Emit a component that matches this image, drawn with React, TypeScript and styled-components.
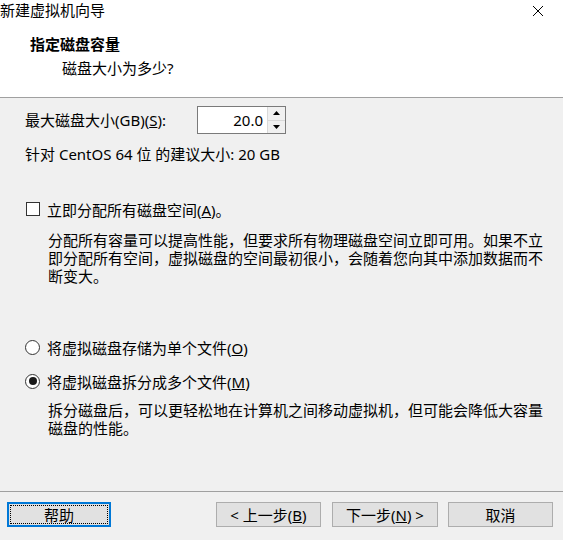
import React from "react";
import styled, { createGlobalStyle } from "styled-components";

const Global = createGlobalStyle`
  html, body { margin: 0; padding: 0; background: #f0f0f0; }
  body { font-family: "Noto Sans", "Noto Sans CJK SC", sans-serif; font-size: 15px; color: #000; }
  * { box-sizing: border-box; }
`;

const Window = styled.div`
  width: 563px;
  height: 540px;
  display: flex;
  flex-direction: column;
  background: #f0f0f0;
  overflow: hidden;
`;

const TitleBar = styled.div`
  height: 22px;
  background: #fff;
  display: flex;
  align-items: center;
  justify-content: space-between;
  padding: 0 19px 0 0;
`;

const TitleText = styled.span`
  font-size: 15px;
  line-height: 20px;
  color: #000;
  margin-top: -2px;
`;

const Header = styled.div`
  height: 76px;
  background: #fff;
  border-bottom: 1px solid #a0a0a0;
  padding: 12px 0 0 30px;
  display: flex;
  flex-direction: column;
  gap: 4px;
`;

const HeaderTitle = styled.div`
  font-weight: bold;
  line-height: 20px;
`;

const HeaderSub = styled.div`
  line-height: 20px;
  padding-left: 32px;
`;

const Body = styled.div`
  flex: 1;
  padding: 8px 0 0 25px;
  display: flex;
  flex-direction: column;
`;

const SizeRow = styled.div`
  height: 28px;
  display: flex;
  align-items: center;
`;

const Label = styled.span`
  width: 172px;
  line-height: 18px;
`;

const Spin = styled.div`
  width: 89px;
  height: 28px;
  border: 1px solid #7a7a7a;
  background: #fff;
  display: flex;
`;

const SpinValue = styled.div`
  flex: 1;
  text-align: right;
  padding-right: 4px;
  line-height: 26px;
  font-size: 15px;
`;

const SpinButtons = styled.div`
  width: 18px;
  display: flex;
  flex-direction: column;
  border-left: 1px solid #d9d9d9;
`;

const SpinBtn = styled.div<{ $down?: boolean }>`
  flex: 1;
  background: #f0f0f0;
  display: flex;
  align-items: center;
  justify-content: center;
  border-top: ${(p) => (p.$down ? "1px solid #d9d9d9" : "none")};
`;

const Line = styled.div<{ $mt?: number }>`
  line-height: 18px;
  margin-top: ${(p) => p.$mt ?? 0}px;
`;

const OptionRow = styled.div<{ $mt: number }>`
  display: flex;
  align-items: center;
  height: 18px;
  margin-top: ${(p) => p.$mt}px;
  gap: 7px;
`;

const CheckBox = styled.span`
  flex-shrink: 0;
  width: 14px;
  height: 14px;
  margin-left: 1px;
  border: 1px solid #333;
  background: #fff;
  display: inline-block;
`;

const Radio = styled.span<{ $on?: boolean }>`
  flex-shrink: 0;
  width: 15px;
  height: 15px;
  border-radius: 50%;
  border: 1px solid #333;
  background: #fff;
  display: inline-flex;
  align-items: center;
  justify-content: center;
  &::after {
    content: "";
    width: 8px;
    height: 8px;
    border-radius: 50%;
    background: ${(p) => (p.$on ? "#1a1a1a" : "transparent")};
  }
`;

const Desc = styled.div<{ $mt: number }>`
  margin-top: ${(p) => p.$mt}px;
  padding-left: 23px;
  line-height: 18px;
  width: 540px;
`;

const Footer = styled.div`
  height: 49px;
  border-top: 1px solid #a0a0a0;
  padding: 10px 10px 0 7px;
  display: flex;
  align-items: flex-start;
`;

const Button = styled.div<{ $w: number; $ml?: number; $focus?: boolean }>`
  position: relative;
  width: ${(p) => p.$w}px;
  height: 25px;
  margin-left: ${(p) => p.$ml ?? 0}px;
  background: #e1e1e1;
  border: 1px solid ${(p) => (p.$focus ? "#0078d7" : "#adadad")};
  box-shadow: ${(p) => (p.$focus ? "inset 0 0 0 1px #0078d7" : "none")};
  display: flex;
  align-items: center;
  justify-content: center;
  line-height: 18px;
  &::after {
    content: "";
    display: ${(p) => (p.$focus ? "block" : "none")};
    position: absolute;
    inset: 2px;
    border: 1px dotted #000;
  }
`;

export default function App() {
  return (
    <>
      <Global />
      <Window>
        <TitleBar>
          <TitleText>新建虚拟机向导</TitleText>
          <svg width="12" height="12" viewBox="0 0 12 12">
            <path d="M1 1 L11 11 M11 1 L1 11" stroke="#000" strokeWidth="1" />
          </svg>
        </TitleBar>
        <Header>
          <HeaderTitle>指定磁盘容量</HeaderTitle>
          <HeaderSub>磁盘大小为多少?</HeaderSub>
        </Header>
        <Body>
          <SizeRow>
            <Label>
              最大磁盘大小(GB)(<u>S</u>):
            </Label>
            <Spin>
              <SpinValue>20.0</SpinValue>
              <SpinButtons>
                <SpinBtn>
                  <svg width="7" height="4" viewBox="0 0 7 4">
                    <path d="M0 4 L3.5 0 L7 4 Z" fill="#000" />
                  </svg>
                </SpinBtn>
                <SpinBtn $down>
                  <svg width="7" height="4" viewBox="0 0 7 4">
                    <path d="M0 0 L7 0 L3.5 4 Z" fill="#000" />
                  </svg>
                </SpinBtn>
              </SpinButtons>
            </Spin>
          </SizeRow>
          <Line $mt={11}>针对 CentOS 64 位 的建议大小: 20 GB</Line>
          <OptionRow $mt={37}>
            <CheckBox />
            <span>
              立即分配所有磁盘空间(<u>A</u>)。
            </span>
          </OptionRow>
          <Desc $mt={13}>
            分配所有容量可以提高性能，但要求所有物理磁盘空间立即可用。如果不立
            <br />
            即分配所有空间，虚拟磁盘的空间最初很小，会随着您向其中添加数据而不
            <br />
            断变大。
          </Desc>
          <OptionRow $mt={53}>
            <Radio />
            <span>
              将虚拟磁盘存储为单个文件(<u>O</u>)
            </span>
          </OptionRow>
          <OptionRow $mt={16}>
            <Radio $on />
            <span>
              将虚拟磁盘拆分成多个文件(<u>M</u>)
            </span>
          </OptionRow>
          <Desc $mt={11}>
            拆分磁盘后，可以更轻松地在计算机之间移动虚拟机，但可能会降低大容量
            <br />
            磁盘的性能。
          </Desc>
        </Body>
        <Footer>
          <Button $w={104} $focus>
            帮助
          </Button>
          <Button $w={105} $ml={105}>
            &lt; 上一步(<u>B</u>)
          </Button>
          <Button $w={106} $ml={11}>
            下一步(<u>N</u>) &gt;
          </Button>
          <Button $w={105} $ml={10}>
            取消
          </Button>
        </Footer>
      </Window>
    </>
  );
}
